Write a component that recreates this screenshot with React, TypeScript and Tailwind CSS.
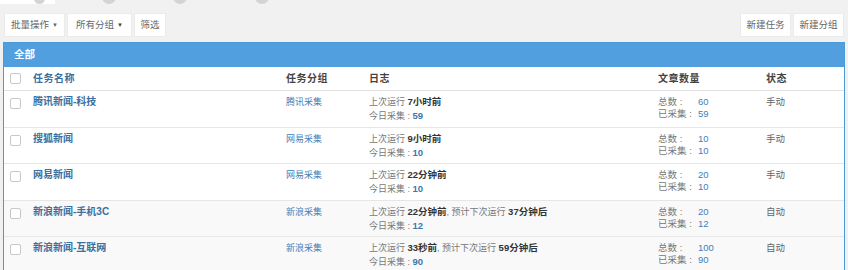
const tabs = [
  { label: '全部', count: 5, active: true },
  { label: '手动', count: 3 },
  { label: '自动', count: 2 },
  { label: '已停用', count: 0 },
];

type Task = {
  name: string;
  group: string;
  last: string;
  next?: string;
  today: number;
  total: number;
  collected: number;
  mode: string;
};

const tasks: Task[] = [
  { name: '腾讯新闻-科技', group: '腾讯采集', last: '7小时前', today: 59, total: 60, collected: 59, mode: '手动' },
  { name: '搜狐新闻', group: '网易采集', last: '9小时前', today: 10, total: 10, collected: 10, mode: '手动' },
  { name: '网易新闻', group: '网易采集', last: '22分钟前', today: 10, total: 20, collected: 10, mode: '手动' },
  { name: '新浪新闻-手机3C', group: '新浪采集', last: '22分钟前', next: '37分钟后', today: 12, total: 20, collected: 12, mode: '自动' },
  { name: '新浪新闻-互联网', group: '新浪采集', last: '33秒前', next: '59分钟后', today: 90, total: 100, collected: 90, mode: '自动' },
];

const grid = 'grid grid-cols-[29px_253px_83px_289px_108px_1fr]';

function Checkbox() {
  return <span className="block w-[11px] h-[11px] border border-[#c8c8c8] rounded-[2px] bg-white" />;
}

function Btn({ children, className = '' }: { children: React.ReactNode; className?: string }) {
  return (
    <div
      className={`h-[24px] flex items-center justify-center whitespace-nowrap px-[5px] bg-white border border-[#ebebeb] text-[9.5px] text-[#666] ${className}`}
    >
      {children}
    </div>
  );
}

export default function App() {
  return (
    <div
      className="w-[848px] h-[270px] overflow-hidden bg-[#f1f1f1] text-[#333]"
      style={{ fontFamily: '"Liberation Sans", "Noto Sans CJK SC", sans-serif' }}
    >
      {/* Tabs (mostly scrolled out of view) */}
      <div className="flex mt-[-22px] h-[26px]">
        {tabs.map((t) => (
          <div
            key={t.label}
            className={`h-[26px] flex items-end gap-[4px] pl-[13px] pr-[10px] text-[11px] leading-[13px] ${
              t.active ? 'bg-white text-[#333] w-[55px]' : 'text-[#3a78b0] ml-[8px]'
            }`}
          >
            <span className="mb-[2px]">{t.label}</span>
            <span className="w-[14px] h-[14px] rounded-full bg-[#d4d4d4] text-[9px] text-white flex items-center justify-center">
              {t.count}
            </span>
          </div>
        ))}
      </div>

      {/* Toolbar */}
      <div className="flex justify-between items-center mt-[9px] px-[4px]">
        <div className="flex gap-[2px]">
          <Btn className="w-[61px]">
            批量操作<span className="ml-[3px] text-[6px]">▼</span>
          </Btn>
          <Btn className="w-[65px] !justify-between !px-[8px]">
            所有分组<span className="text-[6px] text-[#444]">▼</span>
          </Btn>
          <Btn className="w-[32px]">筛选</Btn>
        </div>
        <div className="flex gap-[2px]">
          <Btn className="w-[51px]">新建任务</Btn>
          <Btn className="w-[51px]">新建分组</Btn>
        </div>
      </div>

      {/* Panel */}
      <div className="mx-[3px] mt-[5px] border border-[#4a9ad9] border-b-0 bg-white">
        <div className="h-[24px] bg-[#519fdf] flex items-center px-[10px] text-[10.5px] font-bold text-white">全部</div>
        <div className={`${grid} h-[24px] items-center border-b border-[#e2e2e2] text-[10px] font-bold text-[#444] tracking-[0.5px]`}>
          <div className="pl-[6px]">
            <Checkbox />
          </div>
          <div className="text-[#3a6fa0]">任务名称</div>
          <div>任务分组</div>
          <div>日志</div>
          <div>文章数量</div>
          <div>状态</div>
        </div>
        {tasks.map((t, i) => (
          <div
            key={t.name}
            className={`${grid} h-[36.5px] pt-[4px] border-b border-[#e6e6e6] ${i >= 3 ? 'bg-[#f9f9f9]' : 'bg-white'}`}
          >
            <div className="pl-[6px] pt-[3px]">
              <Checkbox />
            </div>
            <div className="text-[10px] font-bold text-[#3a6fa0] leading-[14px]">{t.name}</div>
            <div className="text-[9px] text-[#3f80b8] leading-[14px]">{t.group}</div>
            <div className="text-[9px] text-[#777] leading-[14px]">
              <div>
                上次运行 <b className="text-[9.5px] text-[#333]">{t.last}</b>
                {t.next && (
                  <>
                    , 预计下次运行 <b className="text-[9.5px] text-[#333]">{t.next}</b>
                  </>
                )}
              </div>
              <div>
                今日采集 : <b className="text-[9.5px] text-[#3a78b0]">{t.today}</b>
              </div>
            </div>
            <div className="text-[9.5px] text-[#777] leading-[12px] pt-[1px]">
              <div className="flex">
                <span className="w-[40px]">总数 :</span>
                <span className="text-[#3f80b8]">{t.total}</span>
              </div>
              <div className="flex">
                <span className="w-[40px]">已采集 :</span>
                <span className="text-[#3f80b8]">{t.collected}</span>
              </div>
            </div>
            <div className="text-[9.5px] text-[#666] leading-[14px]">{t.mode}</div>
          </div>
        ))}
      </div>
    </div>
  );
}
